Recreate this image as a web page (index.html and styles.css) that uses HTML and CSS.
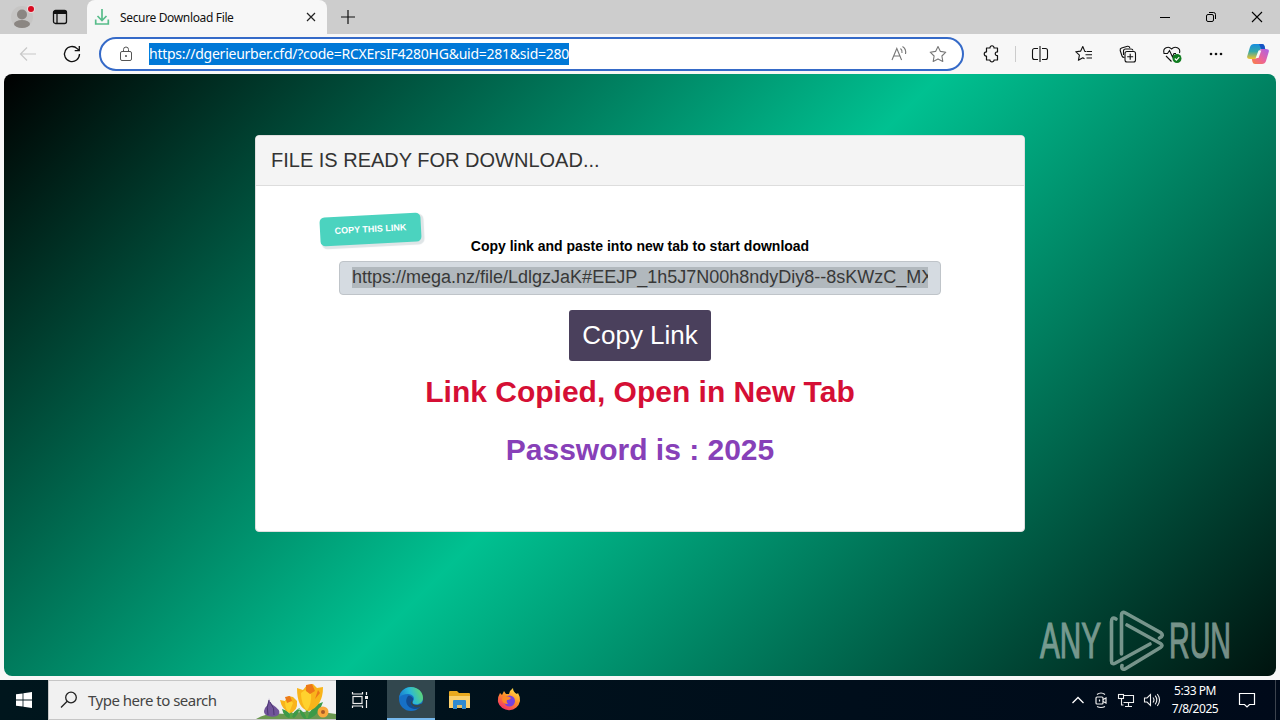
FILE: index.html
```
<!DOCTYPE html>
<html lang="en">
<head>
    <meta charset="UTF-8">
    <meta name="viewport" content="width=device-width, initial-scale=1.0">
    <title>Secure Download File</title>
    <link rel="stylesheet" href="styles.css">
</head>
<body>
    <div class="tabs">
        <svg class="avatar" width="26" height="28" viewBox="0 0 26 28">
            <circle cx="12" cy="15" r="11" fill="#c6c5c4"/>
            <circle cx="12" cy="12.500" r="5" fill="#8b8682"/>
            <ellipse cx="12" cy="22" rx="8" ry="4" fill="#8b8682"/>
            <circle cx="21" cy="7" r="4" fill="#ecd8d8"/>
            <circle cx="21" cy="7" r="3" fill="#d80a20"/>
        </svg>
        <svg class="workspace" width="16" height="16" viewBox="0 0 16 16" fill="none" stroke="#111">
            <rect x="1.500" y="1.500" width="13" height="13" rx="2" stroke-width="1.300"/>
            <path d="M1.500 3.500h13" stroke-width="3"/>
            <path d="M5 4v10" stroke-width="1.300"/>
        </svg>
        <div class="tab">
            <svg width="16" height="18" viewBox="0 0 16 18" fill="none" stroke="#58bd8b" stroke-width="1.700">
                <path d="M8 1v11M3.500 8l4.500 4.500L12.500 8M1.700 11.500v4.500h12.600v-4.500"/>
            </svg>
            <span class="title">Secure Download File</span>
            <svg width="10" height="10" viewBox="0 0 10 10" stroke="#222" stroke-width="1.200"><path d="M1 1l8 8M9 1l-8 8"/></svg>
        </div>
        <svg class="plus" width="14" height="14" viewBox="0 0 14 14" stroke="#111" stroke-width="1.200"><path d="M7 0v14M0 7h14"/></svg>
        <div class="controls">
            <svg width="12" height="12" viewBox="0 0 12 12" stroke="#000"><path d="M1 6.500h10"/></svg>
            <svg width="12" height="12" viewBox="0 0 12 12" fill="none" stroke="#000"><rect x="1.500" y="3.500" width="7" height="7" rx="1.500"/><path d="M4 1.500h4.500a2 2 0 0 1 2 2V8"/></svg>
            <svg width="12" height="12" viewBox="0 0 12 12" stroke="#000" stroke-width="1.100"><path d="M1 1l10 10M11 1L1 11"/></svg>
        </div>
    </div>

    <div class="toolbar">
        <div class="tool"><svg width="20" height="20" viewBox="0 0 20 20" fill="none" stroke="#c8c8c8" stroke-width="1.200"><path d="M18 10H3M9 3.500L2.500 10 9 16.500"/></svg></div>
        <div class="tool"><svg width="20" height="20" viewBox="0 0 20 20" fill="none" stroke="#111" stroke-width="1.300"><path d="M17.500 10a7.500 7.500 0 1 1-2.300-5.400L17 6.300M17.300 2v4.600h-4.600"/></svg></div>
        <div class="address">
            <svg class="lock" width="14" height="16" viewBox="0 0 14 16" fill="none" stroke="#555"><rect x="1.500" y="5.500" width="11" height="9" rx="1.500"/><path d="M4.500 5.500v-2a2.500 2.500 0 0 1 5 0v2"/><circle cx="7" cy="10" r=".6" fill="#333"/></svg>
            <span class="url">https://dgerieurber.cfd/?code=RCXErsIF4280HG&amp;uid=281&amp;sid=280</span>
            <svg class="read" width="18" height="18" viewBox="0 0 18 18" fill="none" stroke="#777" stroke-width="1.100"><path d="M2 15L6.800 3.500l4.800 11.500M3.800 11h6M10.500 3.500q2 1.500 1.500 4.500M12.500 1.500q4 2.500 3 7.500"/></svg>
            <svg width="18" height="18" viewBox="0 0 18 18" fill="none" stroke="#777" stroke-width="1.100" stroke-linejoin="round"><path d="M9 1.500l2.400 4.900 5.400.8-3.900 3.800.9 5.400L9 13.900l-4.800 2.500.9-5.400L1.200 7.200l5.400-.8z"/></svg>
        </div>
        <div class="tool ext"><svg width="20" height="20" viewBox="0 0 20 20" fill="none" stroke="#111" stroke-width="1.200" stroke-linejoin="round"><path d="M5 4h3c-.3-3 4.300-3 4 0h3.500v4c-3-.5-3 4 0 3.700V16H12c.3 2.500-4.300 2.500-4 0H4.500v-4C1.500 12.500 1.500 7.500 4.500 8V4z"/></svg></div>
        <div class="split"></div>
        <div class="tool"><svg width="18" height="18" viewBox="0 0 18 18" fill="none" stroke="#111" stroke-width="1.100"><path d="M9 1v16M7 3.500H3.500a2 2 0 0 0-2 2v7a2 2 0 0 0 2 2H7M11 3.500h3.500a2 2 0 0 1 2 2v7a2 2 0 0 1-2 2H11"/></svg></div>
        <div class="tool"><svg width="18" height="18" viewBox="0 0 18 18" fill="none" stroke="#111" stroke-width="1.100" stroke-linejoin="round"><path d="M11.500 6.500L9.800 6.400 7.800 1.500 5.700 6.100l-5 .6 3.700 3.400-1 5.200 4.400-2.600 1.700 1M12 6.500h5M10.500 9.800H17M11.500 13H17"/></svg></div>
        <div class="tool"><svg width="18" height="18" viewBox="0 0 18 18" fill="none" stroke="#111" stroke-width="1.100"><path d="M5.500 12.500Q3.500 12.500 3 11L1.200 5.500Q.8 3.500 2.600 3L8.500 1.300q1.800-.3 2.400 1.700"/><path d="M4.500 10V6Q4.500 4 6.500 4H12q1.800 0 2 1.500"/><rect x="6" y="6.500" width="10.500" height="10.500" rx="2"/><path d="M11.200 8.800v6M8.200 11.800h6"/></svg></div>
        <div class="tool"><svg width="20" height="20" viewBox="0 0 20 20" fill="none" stroke="#111" stroke-width="1.100"><path d="M2 9C.5 4 6.500 1.500 9.500 5 13 1.500 19 4 17.500 9M4 12l5.500 5.500"/><path d="M1.500 9.500h4L7.500 6.500l3 6.500 1.500-3.500h2"/><circle cx="15" cy="14.500" r="4.500" fill="#107c20" stroke="none"/><path d="M12.800 14.500l1.600 1.600 2.800-3" stroke="#fff"/></svg></div>
        <div class="tool"><svg width="16" height="4" viewBox="0 0 16 4" fill="#111"><circle cx="3" cy="2" r="1.300"/><circle cx="8" cy="2" r="1.300"/><circle cx="13" cy="2" r="1.300"/></svg></div>
        <div class="tool copilot"><svg width="22" height="22" viewBox="0 0 22 22">
            <defs>
                <linearGradient id="cp1" x1="0" y1="0" x2="0" y2="1"><stop offset="0" stop-color="#168ee0"/><stop offset=".5" stop-color="#35a8a8"/><stop offset="1" stop-color="#f3c32c"/></linearGradient>
                <linearGradient id="cp2" x1="1" y1="0" x2="0" y2="1"><stop offset="0" stop-color="#a861ea"/><stop offset=".55" stop-color="#ec6399"/><stop offset="1" stop-color="#fa8240"/></linearGradient>
            </defs>
            <path d="M7 1h8q2 0 2.500 2l.7 3h-3.500q-2 0-2.500 2l-2 6q-.6 2-2.500 2H3q-3.600 0-2.700-3L3 4q1-3 4-3z" fill="url(#cp1)"/>
            <path d="M12 1h3q2 0 2.500 2l.7 3h-4z" fill="#1753c4"/>
            <path d="M15 21H8q-2 0-2.500-2l-.7-3h3q2 0 2.500-2l2-6q.6-2 2.500-2H19q3.600 0 2.700 3L19 18q-1 3-4 3z" fill="url(#cp2)"/>
            <path d="M11.500 7.500h2.800l-2.800 7.500H8.700z" fill="#f7f7f7"/>
        </svg></div>
    </div>

    <div class="page">
        <div class="card">
            <div class="card-header">FILE IS READY FOR DOWNLOAD...</div>
            <div class="card-body">
                <div class="sticker">COPY THIS LINK</div>
                <div class="hint">Copy link and paste into new tab to start download</div>
                <div class="link"><div class="link-text">https://mega.nz/file/LdlgzJaK#EEJP_1h5J7N00h8ndyDiy8--8sKWzC_MX</div></div>
                <div class="copy">Copy Link</div>
                <div class="copied">Link Copied, Open in New Tab</div>
                <div class="password">Password is : 2025</div>
            </div>
        </div>
        <svg class="anyrun" width="210" height="66" viewBox="0 0 210 66">
            <g class="mark-text">
                <text x="3" y="51" textLength="61" lengthAdjust="spacingAndGlyphs">ANY</text>
                <text x="132" y="51" textLength="62" lengthAdjust="spacingAndGlyphs">RUN</text>
            </g>
            <g fill="none" stroke="#b6c9c1" stroke-width="3.600" stroke-linejoin="round" stroke-linecap="round">
                <path d="M79 12q-4.500-3-4.500 3v39q0 4 4 2L113 37"/>
                <path d="M84.500 47V8q0-4 4-2l35 19.500q4 3-1 5.500"/>
                <path d="M90 18l33.500 18.500q3 2 0 4L88 62q-4 1-3-3.500"/>
            </g>
        </svg>
    </div>

    <div class="taskbar">
        <div class="start"><svg width="16" height="16" viewBox="0 0 16 16" fill="#fff"><path d="M0 2.300L6.600 1.400v6.200H0zM7.400 1.300L16 0v7.600H7.400zM0 8.400h6.600v6.200L0 13.700zM7.400 8.400H16V16l-8.600-1.300z"/></svg></div>
        <div class="search">
            <svg width="18" height="18" viewBox="0 0 18 18" fill="none" stroke="#222" stroke-width="1.300"><circle cx="11" cy="6.500" r="5.300"/><path d="M7.200 10.300L1 16.500"/></svg>
            <span class="search-text">Type here to search</span>
            <svg class="flowers" width="80" height="38" viewBox="0 0 80 38">
                <path d="M0 38q12-7 30-5 25-5 50 0v5z" fill="#6b9850"/>
                <path d="M51 38Q49 31 42 27q5 13 9 11M51 38q4-14 16-17-4 13-14 17M35 36q-1-6-9-8 2 8 7 9M36 36q1-6 8-9-2 7-6 10" fill="#3d9a48"/>
                <path d="M51 28v9M35 29v8" stroke="#57a544" stroke-width="2.500"/>
                <path d="M13 17q0 4 4 7 8 5 6 9-3 4-11 2-6-2-3-8 4-4 4-10z" fill="#71549a"/>
                <path d="M13 19q-3 7-1 15M14 21q5 6 4 13" stroke="#4c3674" fill="none"/>
                <path d="M24 19l5 1 3-5 5 1 4 4q1 10-7 12-8-3-10-13z" fill="#f9b41b"/>
                <path d="M29 20l4-3 4 5-4 10q-4-4-4-12z" fill="#ffd12d"/>
                <path d="M29 16l5-1 2 5-5 2z" fill="#ed7b18"/>
                <path d="M41 7l6 2 4-5 6-1 4 4 6-1q0 19-14 24Q41 28 41 7z" fill="#f9b41a"/>
                <path d="M45 12l4-3 6 4q1 9-4 17-6-7-6-18z" fill="#ffd22e"/>
                <path d="M50 4l6-1 3 7-5 3-4-3zM62 9l-3 9 5-6z" fill="#ed7818"/>
                <circle cx="67" cy="31" r="5.500" fill="#f9a83c"/><circle cx="67" cy="31" r="2" fill="#a85a28"/>
            </svg>
        </div>
        <div class="app"><svg class="task-view" width="18" height="18" viewBox="0 0 18 18" fill="none" stroke="#eee" stroke-width="1.200"><rect x="2" y="5.500" width="9" height="7"/><path d="M1.500 1v2h10V1M1.500 17v-2h10v2M15.500 1v3M15.500 9v8"/><path d="M14 6.500h3" stroke-width="3"/></svg></div>
        <div class="app active"><svg width="26" height="26" viewBox="0 0 26 26">
            <defs><linearGradient id="edge" x1="0" y1=".6" x2="1" y2=".3"><stop offset="0" stop-color="#1678cf"/><stop offset=".5" stop-color="#2ab8d8"/><stop offset="1" stop-color="#63d96b"/></linearGradient></defs>
            <circle cx="13" cy="13" r="12" fill="#1670c6"/>
            <path d="M1 12C2 5 7 1 13 1c7 0 12 5 12 11 0 5-5 7-8 6-3 0-3-2-1.500-3.500C17 12 15 8 10 8c-4 0-7 1-9 4z" fill="url(#edge)"/>
            <path d="M10 10c-4 5-1 12 6 13 3 .5 6-1 7-3-8 3-13-2-8-6 1-2-3-5-5-4z" fill="#124b91"/>
            <path d="M15 14.500c-2 3 1 5 5 4.500l5-2v3.500l-3 .5c-3 1-7 0-8.500-2-1.500-2-.5-4.500 1.500-4.500z" fill="#32474e"/>
        </svg></div>
        <div class="app"><svg width="22" height="20" viewBox="0 0 22 20">
            <path d="M0 2q0-1 1-1h7l2 2h10q1 0 1 1v13H0z" fill="#e9a91f"/>
            <path d="M0 6h21v12H0z" fill="#fbd06e"/>
            <path d="M4 11q0-1 1-1h11q1 0 1 1v8h-4v-4H8v4H4z" fill="#2f8ad0"/>
            <path d="M8 15h5v3H8z" fill="#e3c06a"/>
        </svg></div>
        <div class="app"><svg width="24" height="24" viewBox="0 0 24 24">
            <defs><linearGradient id="fox" x1=".8" y1="0" x2=".2" y2="1"><stop offset="0" stop-color="#ffe64a"/><stop offset=".45" stop-color="#ff9228"/><stop offset="1" stop-color="#f4256d"/></linearGradient></defs>
            <path d="M3 5l2 2 2-4 2 3h3q1-4 4-6 0 4 4 6l1-1q2 3 2 8a11.300 11.300 0 0 1-22 1q-.5-5 2-9z" fill="url(#fox)"/>
            <circle cx="12.500" cy="13" r="5.500" fill="#7542df"/>
            <path d="M6 9q4-2 8 1-1 2-4 2-1 2 1 4-6 0-6-5z" fill="#ff8a26"/>
        </svg></div>
        <div class="tray">
            <svg width="14" height="10" viewBox="0 0 14 10" fill="none" stroke="#fff" stroke-width="1.300"><path d="M1.500 8L7 2.500 12.500 8"/></svg>
            <svg width="16" height="18" viewBox="0 0 16 18" fill="none" stroke="#eee" stroke-width="1.200"><rect x="3" y="6" width="7" height="7" rx="1"/><path d="M10 8.500l3-1.500v5l-3-1.500M4 3.500q4-3 8 0M4 15.500q4 2 8 0"/><path d="M6.500 8.500v2"/></svg>
            <svg width="18" height="16" viewBox="0 0 18 16" fill="none" stroke="#eee" stroke-width="1.100"><path d="M6.500 3.500h10v7h-10M4.500 7v6h2M11.500 10.500V14M8 14.500h7"/><rect x="1.500" y="2.500" width="5" height="4"/></svg>
            <svg width="18" height="16" viewBox="0 0 18 16" fill="none" stroke="#eee" stroke-width="1.100"><path d="M1.500 6v4H4l3.500 3.500v-11L4 6zM10 5.500q2 2.500 0 5M12.200 3.700q3.200 4.300 0 8.600M14.300 2q4.500 6 0 12"/></svg>
        </div>
        <div class="clock"><span>5:33 PM</span><span>7/8/2025</span></div>
        <svg class="notice" width="18" height="18" viewBox="0 0 18 18" fill="none" stroke="#fff" stroke-width="1.200"><path d="M1.500 2.500h15v11h-5L9 16l-2.500-2.500h-5z"/></svg>
        <div class="show-desktop"></div>
    </div>
</body>
</html>
```
FILE: styles.css
```
*{
    box-sizing: border-box;
}
body{
    margin: 0;
    width: 1280px;
    height: 720px;
    overflow: hidden;
    display: flex;
    flex-direction: column;
    background: #f7f7f7;
    font-family: "Noto Sans", "Open Sans", sans-serif;
}
svg{
    display: block;
    flex: none;
}
/* tab strip */
.tabs{
    height: 34px;
    display: flex;
    align-items: center;
    background: #cdcdcd;
    padding-left: 10px;
}
.avatar{
    margin-bottom: 2px;
}
.workspace{
    margin-left: 16px;
}
.tab{
    width: 240px;
    height: 34px;
    margin-left: 19px;
    padding: 0 11px 0 7px;
    display: flex;
    align-items: center;
    background: #f7f7f7;
    border-radius: 8px 8px 0 0;
}
.title{
    flex: 1;
    margin-left: 10px;
    font-size: 12px;
    letter-spacing: -0.35px;
    color: #111;
    white-space: nowrap;
}
.plus{
    margin-left: 14px;
}
.controls{
    margin-left: auto;
    padding-right: 17px;
    display: flex;
    gap: 34px;
}
/* toolbar */
.toolbar{
    height: 40px;
    display: flex;
    align-items: center;
    padding-left: 6px;
}
.tool{
    width: 44px;
    flex: none;
    display: flex;
    justify-content: center;
}
.address{
    width: 865px;
    height: 34px;
    margin-left: 5px;
    padding: 0 15px 0 18px;
    display: flex;
    align-items: center;
    flex: none;
    background: #fff;
    border: 2px solid #356ac8;
    border-radius: 17px;
}
.url{
    margin-left: 16px;
    height: 22px;
    line-height: 21px;
    background: #0078d7;
    color: #fff;
    font-size: 14px;
    letter-spacing: -0.25px;
    white-space: nowrap;
}
.read{
    margin-left: auto;
    margin-right: 21px;
}
.ext{
    margin-left: 6px;
}
.split{
    width: 1px;
    height: 16px;
    margin: 0 2px 0 1px;
    flex: none;
    background: #ccc;
}
.copilot{
    width: 40px;
}
/* web page */
.page{
    position: relative;
    height: 602px;
    margin: 0 4px 4px;
    padding-top: 61px;
    border-radius: 8px;
    background: linear-gradient(135deg, #000, #00c191 50%, #000 105.5%);
    font-family: "Liberation Sans", Arial, sans-serif;
}
.card{
    width: 770px;
    height: 397px;
    margin: 0 auto;
    background: #fff;
    border: 1px solid #dfdfdf;
    border-radius: 4px;
}
.card-header{
    height: 50px;
    padding-left: 15px;
    line-height: 48px;
    font-size: 20px;
    color: #333;
    background: #f4f4f4;
    border-bottom: 1px solid #ddd;
    border-radius: 3px 3px 0 0;
}
.card-body{
    padding-top: 29px;
    display: flex;
    flex-direction: column;
    align-items: center;
}
.sticker{
    align-self: flex-start;
    width: 101px;
    height: 29px;
    margin-left: 64px;
    line-height: 29px;
    text-align: center;
    font-size: 9px;
    font-weight: bold;
    color: #fff;
    background: #4bd3bf;
    border-radius: 5px;
    box-shadow: 2px 2px 1px 1px #dfe5e7;
    transform: rotate(-3deg);
}
.hint{
    margin-top: -6px;
    line-height: 16px;
    font-size: 14px;
    font-weight: bold;
    color: #000;
}
.link{
    width: 602px;
    height: 34px;
    margin-top: 7px;
    padding: 5px 12px;
    background: #d5dbe1;
    border: 1px solid #bfc4c9;
    border-radius: 4px;
}
.link-text{
    height: 21px;
    line-height: 20px;
    font-size: 18px;
    color: #383838;
    background: #b1b8bd;
    white-space: nowrap;
    overflow: hidden;
}
.copy{
    width: 142px;
    height: 51px;
    margin-top: 15px;
    line-height: 50px;
    text-align: center;
    font-size: 26px;
    color: #fff;
    background: #4a405c;
    border-radius: 3px;
}
.copied, .password{
    line-height: 34px;
    font-size: 30px;
    font-weight: bold;
}
.copied{
    margin-top: 14px;
    color: #d50f35;
}
.password{
    margin-top: 24px;
    color: #8740b8;
}
/* watermark over the page corner */
.anyrun{
    position: absolute;
    right: 29px;
    bottom: 3px;
    opacity: 0.65;
}
.mark-text{
    font-size: 50px;
    fill: #b6c9c1;
    stroke: #b6c9c1;
    stroke-width: 1.2px;
}
/* taskbar */
.taskbar{
    height: 40px;
    display: flex;
    align-items: center;
    background: linear-gradient(90deg, #00161d, #000a1a);
}
.start{
    width: 48px;
    display: flex;
    justify-content: center;
}
.search{
    width: 288px;
    height: 40px;
    padding-left: 11px;
    display: flex;
    align-items: center;
    background: #f1f1f1;
    border: 1px solid #c6c6c6;
    border-right: none;
}
.search-text{
    margin-left: 10px;
    font-size: 15px;
    letter-spacing: -0.5px;
    color: #444;
    white-space: nowrap;
}
.flowers{
    margin-left: auto;
}
.app{
    width: 49px;
    height: 40px;
    display: flex;
    align-items: center;
    justify-content: center;
}
.task-view{
    margin-right: 2px;
}
.active{
    width: 48px;
    margin-left: 2px;
    background: #32474e;
    border-bottom: 2px solid #76b9ed;
}
.tray{
    margin-left: auto;
    display: flex;
    align-items: center;
    gap: 8px;
}
.clock{
    width: 50px;
    margin-left: 9px;
    display: flex;
    flex-direction: column;
    align-items: center;
    line-height: 18px;
    font-size: 12px;
    letter-spacing: -0.45px;
    color: #fff;
    white-space: nowrap;
}
.notice{
    margin-left: 18px;
    margin-right: 19px;
}
.show-desktop{
    width: 5px;
    height: 40px;
    border-left: 1px solid #3c434e;
}
```
